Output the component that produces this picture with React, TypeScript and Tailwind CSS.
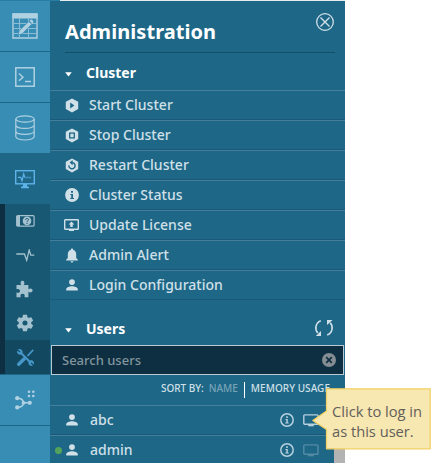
import React from "react";

type IconProps = { children: React.ReactNode; w?: number; h?: number; className?: string };

function Svg({ children, w = 16, h = 16, className = "" }: IconProps) {
  return (
    <svg width={w} height={h} viewBox={`0 0 ${w} ${h}`} fill="none" className={`shrink-0 ${className}`}>
      {children}
    </svg>
  );
}

const HEX = "M7 0.5 13.2 3.7V11L7 14.4 0.8 11V3.7Z";

const PlayHex = () => (
  <Svg w={14} h={15}>
    <path d={HEX} fill="#d0e0e8" />
    <path d="M5.2 4.6V10.4L9.4 7.5Z" fill="#1e6787" />
  </Svg>
);
const StopHex = () => (
  <Svg w={14} h={15}>
    <path d={HEX} fill="#d0e0e8" />
    <rect x="4.7" y="5.1" width="4.6" height="4.8" stroke="#1e6787" strokeWidth="1.3" />
  </Svg>
);
const RestartHex = () => (
  <Svg w={14} h={15}>
    <path d={HEX} fill="#d0e0e8" />
    <path d="M3.9 7.3A3.1 3.1 0 1 0 7 4.6" stroke="#1e6787" strokeWidth="1.4" />
    <path d="M7.6 2V7.2L4.7 4.6Z" fill="#1e6787" />
  </Svg>
);
const InfoSolid = () => (
  <Svg w={14} h={14}>
    <circle cx="7" cy="7" r="6.9" fill="#d0e0e8" />
    <path d="M6 3H8V4.7H6ZM5.3 6H8V10H9V11H5.2V10H6.2V7H5.3Z" fill="#1e6787" />
  </Svg>
);
const UpdateScreen = () => (
  <Svg w={15} h={14}>
    <rect x="0.7" y="1.7" width="13.6" height="9.6" rx="0.6" stroke="#d0e0e8" strokeWidth="1.4" />
    <path d="M5 11H10V13H5ZM7.5 3.4 10.3 6.5H8.7V9H6.3V6.5H4.7Z" fill="#d0e0e8" />
  </Svg>
);
const Bell = () => (
  <Svg w={14} h={15}>
    <path
      d="M7 0.5C7.8 0.5 8.1 1 8.1 1.7 10.5 2.4 11.2 4.4 11.2 6.6V10L13 12V12.5H1V12L2.8 10V6.6C2.8 4.4 3.5 2.4 5.9 1.7 5.9 1 6.2 0.5 7 0.5ZM5.6 13.2H8.4C8.4 14 7.8 14.6 7 14.6S5.6 14 5.6 13.2Z"
      fill="#d0e0e8"
    />
  </Svg>
);
const Person = () => (
  <Svg w={12} h={12}>
    <circle cx="6" cy="3.1" r="2.9" fill="#d0e0e8" />
    <path d="M0.2 11.5V10.2C0.2 8.2 3.6 7.2 6 7.2S11.8 8.2 11.8 10.2V11.5Z" fill="#d0e0e8" />
  </Svg>
);
const InfoRing = () => (
  <Svg w={14} h={14}>
    <circle cx="7" cy="7" r="6.2" stroke="#b7d0dd" strokeWidth="1.5" />
    <path d="M6.2 3.3H7.8V4.9H6.2ZM5.4 6H7.8V9.6H8.7V10.5H5.3V9.6H6.3V6.9H5.4Z" fill="#b7d0dd" />
  </Svg>
);
const Monitor = ({ dim = false }: { dim?: boolean }) => (
  <Svg w={16} h={13}>
    <g opacity={dim ? 0.35 : 1}>
      <rect x="0.8" y="0.9" width="14.2" height="9.4" rx="0.8" stroke="#b7d0dd" strokeWidth="1.4" />
      <path d="M5.2 11H10.8V12.3H5.2Z" fill="#b7d0dd" />
    </g>
  </Svg>
);
const Caret = () => (
  <Svg w={7} h={5} className="mt-[4px]">
    <path d="M0.2 0.3H6.8L3.5 4.4Z" fill="#fff" />
  </Svg>
);

const SheetIcon = () => (
  <Svg w={26} h={26}>
    <path d="M0.5 0.5H25.5V5.5H0.5Z" fill="#b0d1e1" />
    <path d="M1 1H25V25H1Z" stroke="#b0d1e1" strokeWidth="1.4" />
    <path d="M7.5 5V25M16.5 5V25M1 10.5H25M1 15.5H25M1 20.5H25" stroke="#8bbdd4" strokeWidth="1" />
    <path d="M6 22.2 7.2 17.8 16.8 8.4 19.8 11.2 10.2 20.8Z" fill="#b0d1e1" stroke="#388db5" strokeWidth="0.7" />
    <path d="M17.5 7.7 18.6 6.7C19.6 5.9 22 8.1 21.2 9.4L20.3 10.5Z" fill="#b0d1e1" />
  </Svg>
);
const TerminalIcon = () => (
  <Svg w={20} h={20}>
    <rect x="0.8" y="0.8" width="18.4" height="18.4" stroke="#b0d1e1" strokeWidth="1.5" />
    <path d="M4 6.5 8 10.2 4 13.8M10 14.5H16" stroke="#b0d1e1" strokeWidth="1.4" />
  </Svg>
);
const DatabaseIcon = () => (
  <Svg w={20} h={26}>
    <ellipse cx="10" cy="4" rx="9.2" ry="3.2" stroke="#b0d1e1" strokeWidth="1.2" />
    <path
      d="M0.8 4V21.5C0.8 23.5 5 25 10 25S19.2 23.5 19.2 21.5V4M0.8 10C0.8 12 5 13.4 10 13.4S19.2 12 19.2 10M0.8 16C0.8 18 5 19.3 10 19.3S19.2 18 19.2 16"
      stroke="#b0d1e1"
      strokeWidth="1.2"
    />
  </Svg>
);
const AdminScreen = () => (
  <Svg w={20} h={20}>
    <rect x="0.7" y="1.7" width="18.6" height="13.1" stroke="#5eb3ea" strokeWidth="1.4" />
    <path d="M3 8.3H5.7L7 12 8.7 5 9.8 8.5" stroke="#5eb3ea" strokeWidth="1.2" />
    <path d="M10 8.5H16.3" stroke="#3f8dbb" strokeWidth="1.6" />
    <path d="M8 15H12V17L14 18V19.3H6V18L8 17Z" fill="#5eb3ea" />
  </Svg>
);
const LicenseIcon = () => (
  <Svg w={19} h={12}>
    <rect x="0.7" y="0.7" width="17.4" height="10.4" rx="1" stroke="#a3c1cf" strokeWidth="1.2" />
    <path d="M0.7 1H4V11H0.7Z" fill="#a3c1cf" />
    <circle cx="11" cy="5.9" r="4.3" fill="#a3c1cf" />
    <path d="M9.6 4.9C9.6 3 12.5 3 12.5 4.7 12.5 5.8 11 5.8 11 7M11 7.9V9" stroke="#195872" strokeWidth="1" />
  </Svg>
);
const PulseIcon = () => (
  <Svg w={19} h={13}>
    <path d="M0.3 5H8.4L10.7 11.3 13.2 1 14.8 6.2H18.3" stroke="#a3c1cf" strokeWidth="1.3" />
  </Svg>
);
const PuzzleIcon = () => (
  <Svg w={17} h={18}>
    <path
      d="M0.5 5H5.3C3.7 2.8 5 0.8 6.5 0.8S9.3 2.8 7.8 5H12.4V9.2C14.7 7.6 16.6 9 16.6 10.4S14.7 13.3 12.4 11.7V17.2H8.5C9.3 14.8 8.1 13.8 6.6 13.8S3.9 14.8 4.8 17.2H0.5V12.5C3 13.3 4 12.1 4 10.9S3 8.3 0.5 9.2Z"
      fill="#a3c1cf"
    />
  </Svg>
);
const GearIcon = () => (
  <svg width="20" height="20" viewBox="0 0 24 24" fill="#a3c1cf" className="shrink-0">
    <path d="M19.43 12.98c.04-.32.07-.64.07-.98s-.03-.66-.07-.98l2.11-1.65c.19-.15.24-.42.12-.64l-2-3.46c-.12-.22-.39-.3-.61-.22l-2.49 1c-.52-.4-1.08-.73-1.69-.98l-.38-2.65A.488.488 0 0 0 14 2h-4c-.25 0-.46.18-.49.42l-.38 2.65c-.61.25-1.17.59-1.69.98l-2.49-1c-.23-.09-.49 0-.61.22l-2 3.46c-.13.22-.07.49.12.64l2.11 1.65c-.04.32-.07.65-.07.98s.03.66.07.98l-2.11 1.65c-.19.15-.24.42-.12.64l2 3.46c.12.22.39.3.61.22l2.49-1c.52.4 1.08.73 1.69.98l.38 2.65c.03.24.24.42.49.42h4c.25 0 .46-.18.49-.42l.38-2.65c.61-.25 1.17-.59 1.69-.98l2.49 1c.23.09.49 0 .61-.22l2-3.46c.12-.22.07-.49-.12-.64zM12 15a3 3 0 1 1 0-6 3 3 0 0 1 0 6" />
  </svg>
);
const ToolsIcon = () => (
  <Svg w={19} h={19}>
    <path d="M17.2 1.8 11.5 8" stroke="#4797c9" strokeWidth="1.7" />
    <path d="M8.3 10.7 2.7 16.2" stroke="#4797c9" strokeWidth="3.4" strokeLinecap="round" />
    <path d="M5 5 14 14" stroke="#4797c9" strokeWidth="2" />
    <path d="M2 1.4 4.3 3.6 3.6 4.6 1.4 2.6C0.2 5 2.5 7.3 4.9 6.5L6.5 4.9C7.2 2.5 4.7 0.2 2 1.4Z" fill="#4797c9" />
    <path d="M17 17.6 14.7 15.4 15.4 14.4 17.6 16.4C18.8 14 16.5 11.7 14.1 12.5L12.5 14.1C11.8 16.5 14.3 18.8 17 17.6Z" fill="#4797c9" />
  </Svg>
);
const FlowIcon = () => (
  <Svg w={20} h={20}>
    <g fill="#b0d1e1">
      <circle cx="2.2" cy="8.2" r="2.1" />
      <circle cx="2.2" cy="17.4" r="2.1" />
      <circle cx="8.5" cy="12.8" r="1.9" />
      <circle cx="14.8" cy="12.8" r="2.1" />
      <circle cx="14" cy="1.8" r="1.3" />
      <circle cx="18.3" cy="1.8" r="1.3" />
      <circle cx="14" cy="6" r="1.3" />
      <circle cx="18.3" cy="6" r="1.3" />
    </g>
    <path d="M2.2 8.2C6.5 8.2 8.3 9.7 8.5 12.8 8.3 15.9 6.5 17.4 2.2 17.4M8.5 12.8H15" stroke="#b0d1e1" strokeWidth="1.6" />
  </Svg>
);
const RefreshIcon = () => (
  <Svg w={20} h={18}>
    <path d="M6.8 1.8C1.2 4 0.6 10.5 3.8 14M13.2 16C18.8 13.8 19.4 7.3 16.2 3.8" stroke="#d0e0e8" strokeWidth="1.6" />
    <path d="M7 12V17H1.8ZM13 6V1H18.6Z" fill="#d0e0e8" />
  </Svg>
);

const CLUSTER = [
  { label: "Start Cluster", icon: <PlayHex /> },
  { label: "Stop Cluster", icon: <StopHex /> },
  { label: "Restart Cluster", icon: <RestartHex /> },
  { label: "Cluster Status", icon: <InfoSolid /> },
  { label: "Update License", icon: <UpdateScreen /> },
  { label: "Admin Alert", icon: <Bell /> },
  { label: "Login Configuration", icon: <Person /> },
];

const USERS = [
  { name: "abc", online: false },
  { name: "admin", online: true },
];

function Sidebar() {
  const cell = "flex h-[51px] items-center justify-center border-b border-[#1e6787]";
  return (
    <nav className="w-[50px] shrink-0 bg-[#388db5]">
      <div className={cell}><SheetIcon /></div>
      <div className={cell}><TerminalIcon /></div>
      <div className="flex h-[50px] items-center justify-center"><DatabaseIcon /></div>
      <div className="flex h-[51px] items-center justify-center bg-[#1e6787]"><AdminScreen /></div>
      <div className="h-[170px] border-l-[5px] border-[#0d2f41] bg-[#195872]">
        <div className="flex h-[34px] items-center pl-[11px]"><LicenseIcon /></div>
        <div className="flex h-[34px] items-center pl-[11px]"><PulseIcon /></div>
        <div className="flex h-[34px] items-center pl-[11px]"><PuzzleIcon /></div>
        <div className="flex h-[34px] items-center pb-px pl-[10px]"><GearIcon /></div>
        <div className="flex h-[34px] items-center bg-[#124961] pl-[11px]"><ToolsIcon /></div>
      </div>
      <div className="h-px bg-[#1e6787]" />
      <div className={cell}><FlowIcon /></div>
    </nav>
  );
}

function Panel() {
  return (
    <main className="w-[295px] shrink-0 bg-[#1e6787] text-[#d0e0e8]">
      <header className="mx-[15px] mr-[10px] flex h-[52px] justify-between border-b border-[#154e68]">
        <h1 className="pt-[17px] text-[20px] leading-[28px] font-bold tracking-[0.06px] text-white">Administration</h1>
        <Svg w={20} h={20} className="mt-[11px]">
          <circle cx="10" cy="10" r="8.3" stroke="#d0e0e8" strokeWidth="1.3" />
          <path d="M5.5 5.5 14.5 14.5M14.5 5.5 5.5 14.5" stroke="#d0e0e8" strokeWidth="1.4" />
        </Svg>
      </header>

      <div className="flex h-[37px] items-center gap-[14px] pl-[15px] pt-[2px] text-[14px] font-bold text-white">
        <Caret />
        <h2>Cluster</h2>
      </div>
      <ul>
        {CLUSTER.map((c) => (
          <li key={c.label} className="flex h-[30px] items-center border-t border-b border-t-[#437f9b] border-b-[#19597a] pl-[14px]">
            <span className="flex w-[15px] justify-center">{c.icon}</span>
            <span className="pl-[10px] text-[14px] leading-[20px] font-medium tracking-[0.02px]">{c.label}</span>
          </li>
        ))}
      </ul>

      <div className="flex h-[45px] items-end justify-between pr-[11px] pl-[15px]">
        <div className="flex h-[34px] items-center gap-[14px] text-[14px] font-bold text-white">
          <Caret />
          <h2>Users</h2>
        </div>
        <div className="flex h-[34px] items-center"><RefreshIcon /></div>
      </div>

      <div className="mr-px ml-px flex h-[30px] items-center justify-between border border-[#b7cbd5] bg-[#0d2f41] pr-[7px] pl-[10px]">
        <span className="pt-px text-[13px] font-medium text-[#82959f]">Search users</span>
        <Svg w={14} h={14}>
          <circle cx="7" cy="7" r="7" fill="#858d92" />
          <path d="M4.2 4.2 9.8 9.8M9.8 4.2 4.2 9.8" stroke="#0d2f41" strokeWidth="1.7" />
        </Svg>
      </div>

      <div className="flex h-[30px] items-center justify-end pr-[15px] pb-[4px] text-[10px] font-medium whitespace-nowrap">
        <span className="tracking-[-0.02px]">SORT BY:</span>
        <span className="ml-[5px] text-[#78a4b7]">NAME</span>
        <span className="mx-[6px] mt-[3px] h-[16px] w-px bg-white" />
        <span className="tracking-[0.05px]">MEMORY USAGE</span>
      </div>

      <div className="flex">
        <ul className="w-[284px]">
          {USERS.map((u) => (
            <li key={u.name} className="flex h-[30px] items-center border-t border-b border-t-[#437f9b] border-b-[#19597a] pl-[5px]">
              <span className={u.online ? "mt-px size-[7px] rounded-full bg-[#54a35b]" : "size-[7px]"} />
              <span className="ml-[4px]"><Person /></span>
              <span className="ml-[12px] flex-1 text-[14px] leading-[20px] font-medium">{u.name}</span>
              <InfoRing />
              <span className="mr-[15px] ml-[9px]"><Monitor dim={u.online} /></span>
            </li>
          ))}
        </ul>
        <div className="w-[11px] bg-[#b3b3b3]" />
      </div>
    </main>
  );
}

function Tooltip() {
  return (
    <div className="absolute top-[388px] left-[312px] h-[62px] w-[119px]">
      <svg width="119" height="62" viewBox="0 0 119 62" className="absolute inset-0">
        <path d="M14.5 0.8H118.2V60.8H14.5V41.5L0.8 32.5 14.5 23Z" fill="#f7e7b1" stroke="#f1cf62" strokeWidth="1.2" strokeLinejoin="round" />
      </svg>
      <p className="relative pt-[13px] pl-[20px] font-['Open_Sans','Noto_Sans',sans-serif] text-[14.67px] leading-[20px] whitespace-nowrap text-[#62605a]">
        Click to log in
        <br />
        as this user.
      </p>
    </div>
  );
}

export default function App() {
  return (
    <div className="relative h-[463px] w-[443px] overflow-hidden bg-white font-['Noto_Sans',sans-serif]">
      <div className="flex h-px">
        <div className="w-[60px] bg-[#287da2]" />
        <div className="w-[285px] bg-[#e6edf0]" />
      </div>
      <div className="flex h-[462px]">
        <Sidebar />
        <Panel />
      </div>
      <Tooltip />
    </div>
  );
}
